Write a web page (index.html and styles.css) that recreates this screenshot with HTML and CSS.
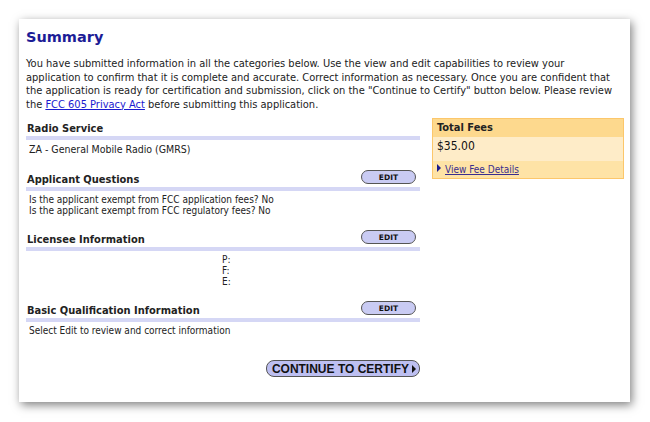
FILE: index.html
```html
<!DOCTYPE html>
<html lang="en">
<head>
    <meta charset="UTF-8">
    <title>Summary</title>
    <link rel="stylesheet" href="styles.css">
</head>
<body>
    <div class="pagina">
        <h1 class="titulo">Summary</h1>
        <p class="intro">You have submitted information in all the categories below. Use the view and edit capabilities to review your<br>
            application to confirm that it is complete and accurate. Correct information as necessary. Once you are confident that<br>
            the application is ready for certification and submission, click on the "Continue to Certify" button below. Please review<br>
            the <a href="#">FCC 605 Privacy Act</a> before submitting this application.</p>

        <div class="colunas">
            <div class="esquerda">
                <div class="secao">
                    <div class="secao-topo">
                        <span class="secao-titulo">Radio Service</span>
                    </div>
                    <div class="secao-corpo grande">ZA - General Mobile Radio (GMRS)</div>
                </div>

                <div class="secao">
                    <div class="secao-topo">
                        <span class="secao-titulo">Applicant Questions</span>
                        <button class="editar">EDIT</button>
                    </div>
                    <div class="secao-corpo">
                        Is the applicant exempt from FCC application fees? No<br>
                        Is the applicant exempt from FCC regulatory fees? No
                    </div>
                </div>

                <div class="secao">
                    <div class="secao-topo">
                        <span class="secao-titulo">Licensee Information</span>
                        <button class="editar">EDIT</button>
                    </div>
                    <div class="secao-corpo contato">
                        P:<br>
                        F:<br>
                        E:
                    </div>
                </div>

                <div class="secao">
                    <div class="secao-topo">
                        <span class="secao-titulo">Basic Qualification Information</span>
                        <button class="editar">EDIT</button>
                    </div>
                    <div class="secao-corpo">Select Edit to review and correct information</div>
                </div>

                <div class="acoes">
                    <button class="certificar">CONTINUE TO CERTIFY <span class="seta"></span></button>
                </div>
            </div>

            <div class="direita">
                <div class="taxas">
                    <div class="taxas-topo">Total Fees</div>
                    <div class="taxas-valor">$35.00</div>
                    <div class="taxas-link"><span class="seta-azul"></span><a href="#">View Fee Details</a></div>
                </div>
            </div>
        </div>
    </div>
</body>
</html>
```

FILE: styles.css
```css
body {
    margin: 0;
    background-color: #fff;
    font-family: "DejaVu Sans Condensed", "DejaVu Sans", sans-serif;
    color: #222;
}

.pagina {
    margin: 19px 20px 20px 19px;
    height: 383px;
    box-sizing: border-box;
    padding: 8px 6px 0 7px;
    background-color: #fff;
    box-shadow: 2px 3px 9px rgba(0,0,0,0.5);
}

.titulo {
    margin: 0;
    font-family: "DejaVu Sans", sans-serif;
    font-size: 14.5px;
    line-height: 20px;
    color: #1c1c96;
}

.intro {
    margin: 10px 0 0 0;
    font-size: 11px;
    line-height: 13.5px;
}

.intro a {
    color: #1a1ad0;
}

.colunas {
    display: flex;
    gap: 12px;
    margin-top: 7px;
}

.esquerda {
    width: 394px;
    padding-top: 4px;
}

.direita {
    width: 192px;
}

.secao {
    margin-bottom: 14px;
}

.secao-topo {
    display: flex;
    justify-content: space-between;
    align-items: flex-end;
    padding-bottom: 1px;
    border-bottom: 4px solid #d5d7f5;
}

.secao-titulo {
    font-size: 11px;
    line-height: 13px;
    font-weight: bold;
    padding-left: 1px;
}

.editar {
    width: 55px;
    height: 14px;
    margin: 0 4px 2px 0;
    padding: 0;
    font-family: "DejaVu Sans", sans-serif;
    font-size: 7.5px;
    font-weight: bold;
    color: #111;
    background-color: #c9cbf3;
    border: 1px solid #555;
    border-radius: 7px;
}

.secao-corpo {
    padding: 3px 0 0 3px;
    font-size: 10px;
    line-height: 11px;
}

.secao-corpo.grande {
    font-size: 10.5px;
    line-height: 13px;
}

.secao-corpo.contato {
    padding-left: 196px;
}

.acoes {
    display: flex;
    justify-content: flex-end;
    margin-top: 24px;
}

.certificar {
    display: flex;
    align-items: center;
    gap: 3px;
    height: 17px;
    padding: 0 3px 0 5px;
    font-family: "Liberation Sans", sans-serif;
    font-size: 12px;
    font-weight: bold;
    color: #111;
    background-color: #bdbff1;
    border: 1px solid #555;
    border-radius: 8px;
}

.seta {
    width: 0;
    height: 0;
    border-top: 4px solid transparent;
    border-bottom: 4px solid transparent;
    border-left: 4px solid #111;
}

.taxas {
    border: 1px solid #fcc76b;
    background-color: #fee3a6;
}

.taxas-topo {
    height: 18px;
    padding-left: 4px;
    font-size: 11px;
    line-height: 18px;
    font-weight: bold;
    background-color: #fdd98e;
}

.taxas-valor {
    height: 24px;
    padding: 2px 0 0 4px;
    box-sizing: border-box;
    font-size: 12px;
    line-height: 14px;
    color: #111;
    background-color: #feecc8;
}

.taxas-link {
    display: flex;
    align-items: center;
    gap: 4px;
    height: 17px;
    padding-left: 4px;
    font-size: 10px;
}

.taxas-link a {
    color: #3a2e8e;
}

.seta-azul {
    width: 0;
    height: 0;
    border-top: 4px solid transparent;
    border-bottom: 4px solid transparent;
    border-left: 4px solid #1a1a8c;
    margin-top: -4px;
}
```
